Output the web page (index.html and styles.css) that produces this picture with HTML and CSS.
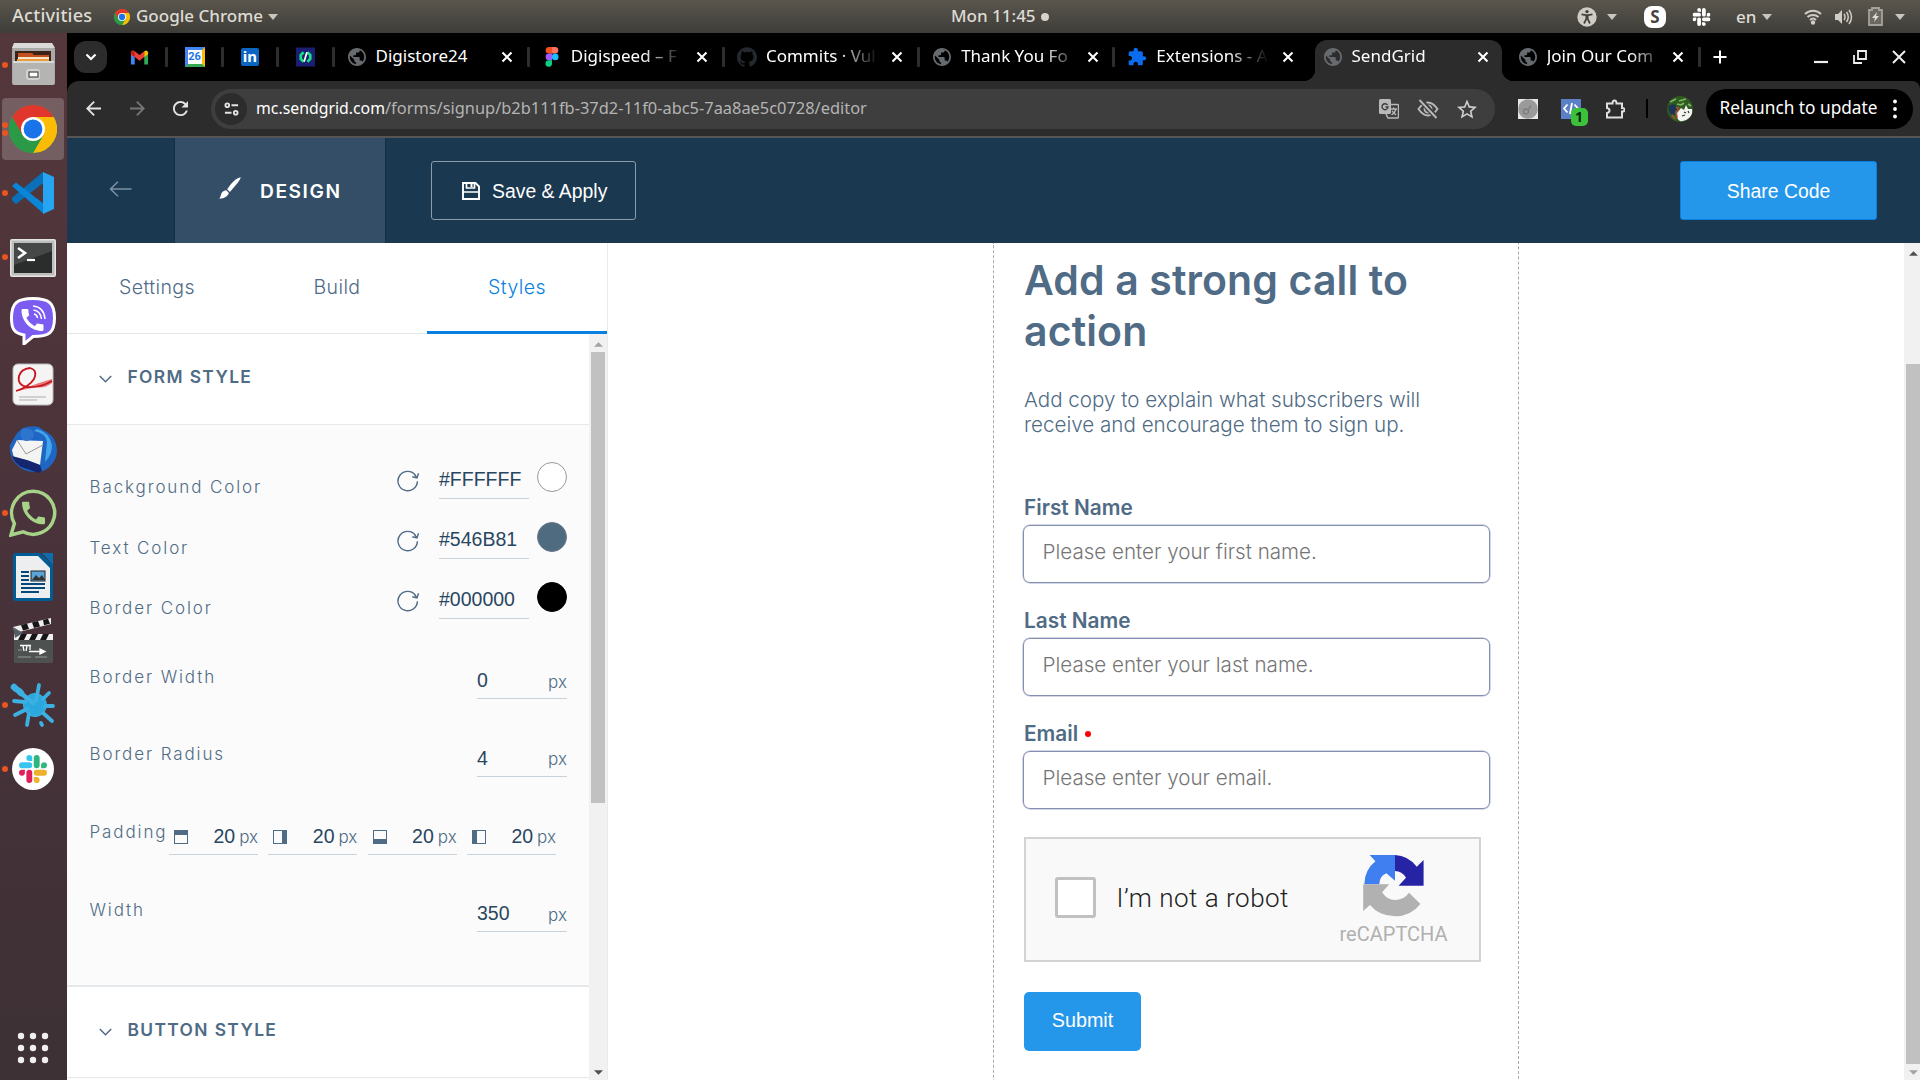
FILE: index.html
```
<!DOCTYPE html>
<html lang="en">
<head>
<meta charset="utf-8">
<title>SendGrid</title>
<link rel="stylesheet" href="styles.css">
</head>
<body>
<svg class="defs" width="0" height="0">
  <symbol id="chrome" viewBox="0 0 48 48">
    <circle cx="24" cy="24" r="24" fill="#34a853"/>
    <path d="M24 12 H44.8 A24 24 0 0 1 24 48 L34.4 30 Z" fill="#fbbc05"/>
    <path d="M3.2 12 A24 24 0 0 0 24 48 L34.4 30 L24 24 L13.6 30 Z" fill="#2b9a46"/>
    <path d="M3.2 12 A24 24 0 0 1 44.8 12 H24 L13.6 30 Z" fill="#e0362b"/>
    <circle cx="24" cy="24" r="12" fill="#fff"/>
    <circle cx="24" cy="24" r="9.4" fill="#1a73e8"/>
  </symbol>
  <symbol id="globe" viewBox="2 2 20 20"><path d="M12 2C6.480 2 2 6.480 2 12s4.480 10 10 10 10-4.480 10-10S17.520 2 12 2zm-1 17.930c-3.950-.49-7-3.850-7-7.930 0-.62.08-1.210.21-1.790L9 15v1c0 1.100.9 2 2 2v1.930zm6.900-2.540c-.26-.81-1-1.390-1.900-1.390h-1v-3c0-.55-.45-1-1-1H8v-2h2c.55 0 1-.45 1-1V7h2c1.100 0 2-.9 2-2v-.41c2.930 1.190 5 4.060 5 7.410 0 2.080-.8 3.970-2.100 5.390z"/></symbol>
  <symbol id="close" viewBox="0 0 12 12"><path d="M1.500 1.500l9 9m0-9l-9 9" fill="none" stroke="currentColor" stroke-width="2.100"/></symbol>
  <symbol id="arrow" viewBox="4 4 16 16"><path d="M20 11H7.830l5.590-5.590L12 4l-8 8 8 8 1.410-1.410L7.830 13H20v-2z"/></symbol>
  <symbol id="puzzle" viewBox="0 0 24 24"><path d="M20.500 11H19V7c0-1.100-.9-2-2-2h-4V3.500C13 2.120 11.880 1 10.500 1S8 2.120 8 3.500V5H4c-1.100 0-1.990.9-1.990 2v3.800H3.500c1.490 0 2.700 1.210 2.700 2.700s-1.210 2.700-2.700 2.700H2V20c0 1.100.9 2 2 2h3.800v-1.500c0-1.490 1.210-2.700 2.700-2.700 1.490 0 2.700 1.210 2.700 2.700V22H17c1.100 0 2-.9 2-2v-4h1.500c1.380 0 2.500-1.120 2.500-2.500S21.880 11 20.500 11z"/></symbol>
  <symbol id="slack-a" viewBox="0 0 24 24"><path d="M5.042 15.165a2.528 2.528 0 0 1-2.520 2.523A2.528 2.528 0 0 1 0 15.165a2.527 2.527 0 0 1 2.522-2.520h2.520v2.520zM6.313 15.165a2.527 2.527 0 0 1 2.521-2.520 2.527 2.527 0 0 1 2.521 2.520v6.313A2.528 2.528 0 0 1 8.834 24a2.528 2.528 0 0 1-2.521-2.522v-6.313z"/></symbol>
  <symbol id="slack-b" viewBox="0 0 24 24"><path d="M8.834 5.042a2.528 2.528 0 0 1-2.521-2.520A2.528 2.528 0 0 1 8.834 0a2.528 2.528 0 0 1 2.521 2.522v2.520H8.834zM8.834 6.313a2.528 2.528 0 0 1 2.521 2.521 2.528 2.528 0 0 1-2.521 2.521H2.522A2.528 2.528 0 0 1 0 8.834a2.528 2.528 0 0 1 2.522-2.521h6.312z"/></symbol>
  <symbol id="slack-c" viewBox="0 0 24 24"><path d="M18.956 8.834a2.528 2.528 0 0 1 2.522-2.521A2.528 2.528 0 0 1 24 8.834a2.528 2.528 0 0 1-2.522 2.521h-2.522V8.834zM17.688 8.834a2.528 2.528 0 0 1-2.523 2.521 2.527 2.527 0 0 1-2.520-2.521V2.522A2.527 2.527 0 0 1 15.165 0a2.528 2.528 0 0 1 2.523 2.522v6.312z"/></symbol>
  <symbol id="slack-d" viewBox="0 0 24 24"><path d="M15.165 18.956a2.528 2.528 0 0 1 2.523 2.522A2.528 2.528 0 0 1 15.165 24a2.527 2.527 0 0 1-2.520-2.522v-2.522h2.520zM15.165 17.688a2.527 2.527 0 0 1-2.520-2.523 2.526 2.526 0 0 1 2.520-2.520h6.313A2.527 2.527 0 0 1 24 15.165a2.528 2.528 0 0 1-2.522 2.523h-6.313z"/></symbol>
  <symbol id="phone" viewBox="3 3 18 18"><path transform="matrix(1 0 0 1 0 0)" d="M20.010 15.380c-1.230 0-2.420-.2-3.530-.56-.35-.12-.74-.03-1.010.24l-1.570 1.970c-2.830-1.350-5.480-3.900-6.890-6.830l1.950-1.660c.27-.28.35-.67.24-1.020-.37-1.110-.56-2.300-.56-3.530 0-.54-.45-.99-.99-.99H4.190C3.650 3 3 3.240 3 3.990 3 13.280 10.730 21 20.010 21c.71 0 .99-.63.99-1.180v-3.450c0-.54-.45-.99-.99-.99z"/></symbol>
  <symbol id="reset" viewBox="0 0 23 22"><path d="M20.400 11.200A9.700 9.700 0 1 1 18.600 5.400M15.300 6.800l4.700 1.200 1.500-4.700M20 8l-2.500-3.700" fill="none" stroke="#4f6b85" stroke-width="1.400"/></symbol>
  <symbol id="chevron" viewBox="0 0 13 8"><path d="M.8 1l5.700 5.700L12.200 1" fill="none" stroke="#4f6b85" stroke-width="1.500"/></symbol>
  <symbol id="caret" viewBox="0 0 10 6"><path d="M0 0h10L5 6z" fill="#c9c6bf"/></symbol>
</svg>

<header class="topbar">
  <div class="top-left">
    <span class="activities">Activities</span>
    <svg class="top-chrome"><use href="#chrome"/></svg>
    <span class="app-name">Google Chrome</span>
    <svg class="caret"><use href="#caret"/></svg>
  </div>
  <div class="clock"><span>Mon 11:45</span><i></i></div>
  <div class="tray">
    <svg class="t-access" viewBox="0 0 20 20"><circle cx="10" cy="10" r="9.700" fill="#cfccc6"/><circle cx="10" cy="4.600" r="1.700" fill="#45423d"/><path d="M4.500 7.300l4.500.8h2l4.500-.8M9.300 8v4L7 16.500M10.700 8v4L13 16.500M10 8v4" fill="none" stroke="#45423d" stroke-width="1.700"/></svg>
    <svg class="caret"><use href="#caret"/></svg>
    <span class="t-skype">S</span>
    <svg class="t-slack" viewBox="0 0 24 24" fill="#fff"><use href="#slack-a"/><use href="#slack-b"/><use href="#slack-c"/><use href="#slack-d"/></svg>
    <span class="t-lang">en</span>
    <svg class="caret"><use href="#caret"/></svg>
    <svg class="t-wifi" viewBox="0 0 18 16" fill="none" stroke="#cfccc6" stroke-width="2"><path d="M1 5.500a11.500 11.500 0 0 1 16 0M3.500 8.600a8 8 0 0 1 11 0" /><path d="M6 11.400a4.500 4.500 0 0 1 6 0" /><circle cx="9" cy="14" r="1.200" fill="#cfccc6"/></svg>
    <svg class="t-vol" viewBox="0 0 18 16" fill="none" stroke="#cfccc6" stroke-width="1.500"><path d="M0 5h3l4-4v14l-4-4H0z" fill="#cfccc6" stroke="none"/><path d="M9 5q2 3 0 6M11.500 3q3.500 5 0 10M14 1q5 7 0 14"/></svg>
    <svg class="t-bat" viewBox="0 0 15 19"><path d="M1 3h3V1h7v2h3v15H1z" fill="#6b6862" stroke="#a5a29c" stroke-width="1.800"/><path d="M9 5l-5 6h3l-1 4 5-6H8z" fill="#dfdcd6"/></svg>
    <svg class="caret"><use href="#caret"/></svg>
  </div>
</header>

<div class="desktop">
  <nav class="dock">
    <div class="app"><i class="dot"></i>
      <svg viewBox="0 0 48 48"><path d="M5 2h38l3 6v34q0 2-2 2H5q-2 0-2-2V8z" fill="#a9a9a7"/><path d="M5 2h38l3 5H3z" fill="#d9d9d7"/><path d="M6 10h36v13H6z" fill="#3a2418"/><path d="M9 12h14l2 2h15v3H9z" fill="#c5501f"/><path d="M9 16h31v2H9z" fill="#f6e6c8"/><path d="M8 18h32v3H8z" fill="#ef9a3c"/><path d="M4 20h41v22q0 2-2 2H6q-2 0-2-2z" fill="#b4b4b2"/><path d="M4 20h41v2H4z" fill="#d8d8d6"/><rect x="17" y="28" width="14" height="11" rx="3" fill="#d2d2d0"/><rect x="20" y="31" width="9" height="5" fill="#fff" stroke="#555" stroke-width="1.300"/></svg></div>
    <div class="app current"><i class="dot"></i><i class="dot"></i><svg><use href="#chrome"/></svg></div>
    <div class="app"><i class="dot"></i>
      <svg viewBox="0 0 48 48"><path d="M34 3v11L7 35l-4-3v-3z" fill="#0065a9"/><path d="M34 14L7 35l-4-4v-2L34 3z" fill="#0b70b8"/><path d="M3 17l4-3.500L35 35v10z" fill="#0a86d9"/><path d="M34 3l11 5v32l-11 5z" fill="#25a5f2"/></svg></div>
    <div class="app"><i class="dot"></i>
      <svg viewBox="0 0 48 48"><rect x="1" y="6" width="46" height="38" rx="2" fill="#e4e4e2"/><rect x="2.500" y="7.500" width="43" height="35" fill="#bdbdbb"/><rect x="5" y="10" width="38" height="30" fill="#2b2d2c"/><path d="M5 10h38v8L5 32z" fill="#454846"/><path d="M9 15l7 5-7 5" fill="none" stroke="#fff" stroke-width="2.600"/><path d="M18 27h8" stroke="#fff" stroke-width="2.200"/></svg></div>
    <div class="app">
      <svg viewBox="0 0 48 48"><path d="M24 1.500C40 1.500 45.500 6 45.500 21S40 39.500 24 39.500l-9 7.500v-9C5 36 2.500 32 2.500 21 2.500 6 8 1.500 24 1.500z" fill="#7c5cf0" stroke="#fff" stroke-width="3"/><use href="#phone" x="12" y="12" width="23" height="22" fill="#fff"/><path d="M24 9q11 1 12 13M24.500 13q7 1 8 9M25 17q3 .5 3.500 4" fill="none" stroke="#fff" stroke-width="1.500"/></svg></div>
    <div class="app">
      <svg viewBox="0 0 48 48"><rect x="4" y="3" width="40" height="41" rx="5" fill="#f4f4f4" stroke="#bbb"/><path d="M43 18q-14 4-24 8l-12 4q12-2 20-4 8 2 16-4z" fill="#e57a7a"/><path d="M7 30q13-4 18-12 4-9-4-11-9 1-11 8-2 9 8 11 13 1 25-6" fill="none" stroke="#c8151d" stroke-width="1.800"/><path d="M10 36h27M10 39h18" stroke="#c4c4c4" stroke-width="1.500"/></svg></div>
    <div class="app">
      <svg viewBox="0 0 48 48"><path d="M14 3q9-3 16-1l4 3q10 4 13 14 3 12-4 20-5 7-14 8-14 1-22-8Q0 32 1 20l4-7q3-6 9-10z" fill="#1f66c4"/><path d="M28 4q12 3 15 16 0 10-7 17l2-20q-1-9-13-11z" fill="#43a5ea"/><path d="M8 15l26 1-3 24-13-5-13-2-2-8z" fill="#f4f4f2"/><path d="M8 15l9 14 17-9" fill="none" stroke="#999" stroke-width="1"/><path d="M12 5q6-4 12 1 3 8-6 10-8 0-6-11z" fill="#2d74cf"/><path d="M3 31q13 3 28 9l2 6-4 2-8-3-9-3q-7-5-9-11z" fill="#14266d"/></svg></div>
    <div class="app"><i class="dot"></i>
      <svg viewBox="0 0 48 48"><path d="M24.500 2.300a21.500 21.500 0 1 1-10.400 40.500L2 46l3.400-11.500A21.500 21.500 0 0 1 24.500 2.300z" fill="none" stroke="#a6d388" stroke-width="3.500"/><use href="#phone" x="13" y="12.500" width="23" height="23" fill="#a6d388"/></svg></div>
    <div class="app">
      <svg viewBox="0 0 48 48"><path d="M7 0h24l13 12v33q0 3-3 3H7q-3 0-3-3V3q0-3 3-3z" fill="#005c94"/><path d="M33 0h11v12z" fill="#0c6ead"/><path d="M7 3h22l12 12v30H7z" fill="#eceef0"/><path d="M12 19h8M12 23h8M12 27h8M12 31h24M12 35h24M12 39h18" stroke="#014a7b" stroke-width="1.900"/><rect x="22" y="18" width="14" height="10" fill="#5aa5d8" stroke="#222"/><path d="M23 27l4-5 3 3 3-3 3 5z" fill="#333"/></svg></div>
    <div class="app">
      <svg viewBox="0 0 48 48"><rect x="5" y="17" width="39" height="29" rx="1.500" fill="#4d5150"/><path d="M5 17h39v6H5z" fill="#eee"/><path d="M12 17h6l-3 6H9zM23 17h6l-3 6h-6zM34 17h6l-3 6h-6z" fill="#161616"/><path d="M4 10L42 1v6L6 16z" fill="#eee"/><path d="M12 8l6-1.500 2 5.500-6 1.500zM23 5.500l6-1.500 2 5.500-6 1.500zM34 3l5-1.200 2 5-6 1.500z" fill="#161616"/><path d="M4 10l10 6-8 5z" fill="#565c66"/><path d="M11 28.500h11M14 29l1 5M18 29l-1 5M21 28v5M20 34.500h14M31 32l5 2.500-5 2.500z" fill="#fff" stroke="#fff" stroke-width="1.300"/><path d="M9 40h13M9 33h4M26 40h12" stroke="#999"/></svg></div>
    <div class="app"><i class="dot"></i>
      <svg viewBox="0 0 48 48" stroke="#3cb0e2" fill="#2ba8de" stroke-linecap="round"><circle cx="26" cy="24" r="11.500"/><path d="M24 22L8 9" stroke-width="4.500"/><path d="M7 8l-2-2M12 12l-2-2" stroke-width="6.500"/><path d="M27 20l3-16M34 18l6-6M36 25l8 0M34 32l9 8M20 32l-2 12M18 28L6 34M16 21l-11-1M32 42l1 2" stroke-width="3.800"/></svg></div>
    <div class="app"><i class="dot"></i>
      <svg viewBox="0 0 48 48"><circle cx="24" cy="24" r="21" fill="#fff"/><g transform="translate(10 10)"><use href="#slack-a" width="28" height="28" fill="#e01e5a"/><use href="#slack-b" width="28" height="28" fill="#36c5f0"/><use href="#slack-c" width="28" height="28" fill="#2eb67d"/><use href="#slack-d" width="28" height="28" fill="#ecb22e"/></g></svg></div>
    <svg class="show-apps" viewBox="0 0 32 32" fill="#f2f0ef"><circle cx="4" cy="4" r="3.200"/><circle cx="16" cy="4" r="3.200"/><circle cx="28" cy="4" r="3.200"/><circle cx="4" cy="16" r="3.200"/><circle cx="16" cy="16" r="3.200"/><circle cx="28" cy="16" r="3.200"/><circle cx="4" cy="28" r="3.200"/><circle cx="16" cy="28" r="3.200"/><circle cx="28" cy="28" r="3.200"/></svg>
  </nav>

  <section class="window">
    <div class="tabstrip">
      <div class="tab-search"><svg viewBox="0 0 12 8"><path d="M1.500 1.500L6 6l4.500-4.500" fill="none" stroke="#fff" stroke-width="2.200"/></svg></div>
      <div class="pinned"><svg viewBox="0 0 20 16"><path d="M1 16V3l4 3v10z" fill="#4285f4"/><path d="M19 16V3l-4 3v10z" fill="#34a853"/><path d="M1 3q1-3 4-1l5 4 5-4v6l-5 4-5-4L1 6z" fill="#ea4335"/><path d="M1 3q1-3 4-1v6L1 5z" fill="#c5221f"/><path d="M19 3q-1-3-4-1v6l4-3z" fill="#fbbc04"/></svg></div><i class="sep"></i>
      <div class="pinned"><span class="cal"><b>26</b></span></div><i class="sep"></i>
      <div class="pinned"><span class="linkedin">in</span></div><i class="sep"></i>
      <div class="pinned"><svg viewBox="0 0 20 20"><path d="M0 0h20v20H0z" fill="#1b1f73"/><path d="M8 5L5 8v4l3 3M12 5l3 3v4l-3 3" fill="none" stroke="#19e07f" stroke-width="2.800"/><path d="M11.500 5l-3 10" stroke="#fff" stroke-width="1.800"/></svg></div><i class="sep"></i>
      <div class="tab"><svg class="fav globe"><use href="#globe"/></svg><span>Digistore24</span><svg class="x"><use href="#close"/></svg></div><i class="sep"></i>
      <div class="tab"><svg class="fav" viewBox="0 0 20 20"><path d="M10 0H7a3.300 3.300 0 0 0 0 6.600h3z" fill="#f24e1e"/><path d="M10 0h3a3.300 3.300 0 0 1 0 6.600h-3z" fill="#ff7262"/><path d="M10 6.600H7a3.300 3.300 0 0 0 0 6.600h3z" fill="#a259ff"/><circle cx="13.200" cy="9.900" r="3.300" fill="#1abcfe"/><path d="M10 13.200H7A3.300 3.300 0 1 0 10 17z" fill="#0acf83"/></svg><span>Digispeed – F</span><svg class="x"><use href="#close"/></svg></div><i class="sep"></i>
      <div class="tab"><svg class="fav" viewBox="0 0 24 24" fill="#24292f"><path d="M12 .297c-6.630 0-12 5.373-12 12 0 5.303 3.438 9.800 8.205 11.385.6.113.82-.258.82-.577 0-.285-.01-1.040-.015-2.040-3.338.724-4.042-1.610-4.042-1.610C4.422 18.070 3.633 17.700 3.633 17.700c-1.087-.744.084-.729.084-.729 1.205.084 1.838 1.236 1.838 1.236 1.070 1.835 2.809 1.305 3.495.998.108-.776.417-1.305.76-1.605-2.665-.3-5.466-1.332-5.466-5.930 0-1.310.465-2.380 1.235-3.220-.135-.303-.54-1.523.105-3.176 0 0 1.005-.322 3.300 1.230.96-.267 1.980-.399 3-.405 1.020.006 2.040.138 3 .405 2.280-1.552 3.285-1.230 3.285-1.230.645 1.653.24 2.873.12 3.176.765.84 1.230 1.910 1.230 3.220 0 4.610-2.805 5.625-5.475 5.920.42.36.81 1.096.81 2.220 0 1.606-.015 2.896-.015 3.286 0 .315.21.69.825.57C20.565 22.092 24 17.592 24 12.297c0-6.627-5.373-12-12-12"/></svg><span>Commits · Vul</span><svg class="x"><use href="#close"/></svg></div><i class="sep"></i>
      <div class="tab"><svg class="fav globe"><use href="#globe"/></svg><span>Thank You Fo</span><svg class="x"><use href="#close"/></svg></div><i class="sep"></i>
      <div class="tab"><svg class="fav" fill="#0b6cf0"><use href="#puzzle"/></svg><span>Extensions - A</span><svg class="x"><use href="#close"/></svg></div><i class="sep off"></i>
      <div class="tab active"><svg class="fav globe"><use href="#globe"/></svg><span>SendGrid</span><svg class="x"><use href="#close"/></svg></div><i class="sep off"></i>
      <div class="tab"><svg class="fav globe"><use href="#globe"/></svg><span>Join Our Com</span><svg class="x"><use href="#close"/></svg></div><i class="sep"></i>
      <svg class="plus" viewBox="0 0 14 14"><path d="M7 0.500v13M.5 7h13" stroke="#fff" stroke-width="2"/></svg>
      <div class="win-buttons">
        <svg viewBox="0 0 14 14"><path d="M0 12h14" stroke="#eee" stroke-width="2.200"/></svg>
        <svg viewBox="0 0 14 14" fill="none" stroke="#eee" stroke-width="1.800"><path d="M5 1h8v8H5zM1 5v8h8"/></svg>
        <svg viewBox="0 0 14 14"><path d="M1 1l12 12M13 1L1 13" stroke="#eee" stroke-width="2"/></svg>
      </div>
    </div>

    <div class="toolbar">
      <div class="nav">
        <svg fill="#e3e3e3"><use href="#arrow"/></svg>
        <svg class="fwd" fill="#757575"><use href="#arrow"/></svg>
        <svg viewBox="4 4 16 16" fill="#e3e3e3"><path d="M17.650 6.350C16.200 4.900 14.210 4 12 4c-4.420 0-7.990 3.580-7.990 8s3.570 8 7.990 8c3.730 0 6.840-2.550 7.730-6h-2.080c-.82 2.330-3.040 4-5.650 4-3.310 0-6-2.690-6-6s2.690-6 6-6c1.660 0 3.140.69 4.220 1.780L13 11h7V4l-2.350 2.350z"/></svg>
      </div>
      <div class="omnibox">
        <div class="site"><svg viewBox="0 0 16 14" fill="none" stroke="#e3e3e3" stroke-width="2"><circle cx="3.500" cy="3" r="2"/><path d="M8 3h7M1 11h7"/><circle cx="12.500" cy="11" r="2"/></svg></div>
        <p class="url"><b>mc.sendgrid.com</b><span>/forms/signup/b2b111fb-37d2-11f0-abc5-7aa8ae5c0728/editor</span></p>
        <div class="omni-icons">
          <svg viewBox="0 0 20 20"><rect x="0" y="0" width="12" height="15" rx="1.500" fill="#b9b9b9"/><path d="M9 5.500h9.500q1 0 1 1V18q0 1-1 1H9L7 15" fill="none" stroke="#b9b9b9" stroke-width="1.500"/><path d="M8.500 6A3 3 0 1 0 9 8H6.500" fill="none" stroke="#3e3e3e" stroke-width="1.400"/><path d="M11 10h7M14.500 8.500V10M17 10q-1 4-4.500 6M13 12l4 4" stroke="#b9b9b9" stroke-width="1.300" fill="none"/></svg>
          <svg class="eye" viewBox="0 0 22 20" fill="none" stroke="#b9b9b9" stroke-width="1.900"><path d="M1.500 10Q6 3.500 11 3.500T20.500 10Q16 16.500 11 16.500T1.500 10z"/><circle cx="11" cy="10" r="3.500"/><path d="M3.500 1l16 18" stroke="#3e3e3e" stroke-width="5"/><path d="M2.500 1l17 18"/></svg>
          <svg viewBox="2 2 20 19" fill="#d0d0d0"><path d="M22 9.240l-7.190-.62L12 2 9.190 8.630 2 9.240l5.460 4.730L5.820 21 12 17.270 18.180 21l-1.630-7.030L22 9.240zM12 15.400l-3.760 2.270 1-4.280-3.320-2.880 4.380-.38L12 6.100l1.710 4.040 4.380.38-3.320 2.880 1 4.280L12 15.400z"/></svg>
        </div>
      </div>
      <svg class="ext1" viewBox="0 0 20 20"><path d="M0 0h20v20H0z" fill="#e6e6e6"/><circle cx="10" cy="10" r="9.800" fill="#9a9a9a"/><circle cx="8" cy="12.500" r="2.500" fill="none" stroke="#7d7d7d" stroke-width="1.300"/><path d="M10.500 10l2.500-3.500" stroke="#7d7d7d" stroke-width="1.300"/></svg>
      <div class="ext2"><svg viewBox="0 0 20 20"><path d="M0 0h20v20H0z" fill="#5b80c7"/><path d="M6.500 5.500L3 9.500l3.500 4M11 4L9 15M13.500 5.500l3.500 4" fill="none" stroke="#fff" stroke-width="1.800"/></svg><b>1</b></div>
      <svg class="ext3" viewBox="0 0 20 20"><path d="M2 4.500h5.500q0-3 2-3t2 3h5.500V9q2.700 0 2.700 1.800T17 12.600V18.500H2V14q2.500-.5 2.500-2.500T2 9z" fill="none" stroke="#dedede" stroke-width="2"/></svg>
      <i class="bar"></i>
      <svg class="avatar" viewBox="0 0 26 26"><circle cx="13" cy="13" r="13" fill="#2f5a22"/><path d="M10 17l4-5 3 2 2-5 2 4 4 0q1 6-3 9-4 4-9 3-4-2-3-8z" fill="#f3f3f0"/><path d="M1 10l6-2 4 4-2 7-6-1z" fill="#1c3654"/><path d="M3 6l6-3M12 5l7-2M14 9l3-2M21 8l3 2M10 8l4 1" stroke="#7cb95c" stroke-width="1.800"/><path d="M9 11l3 2-3 3 1 6M5 19l3 4" stroke="#a0522d" stroke-width="1.800" fill="none"/><path d="M17 16l2 1M21 15l1 2M15 20l3-1" stroke="#333" stroke-width="1.200"/></svg>
      <div class="relaunch"><span>Relaunch to update</span><svg viewBox="0 0 4 20" fill="#fff"><circle cx="2" cy="2.500" r="1.900"/><circle cx="2" cy="10" r="1.900"/><circle cx="2" cy="17.500" r="1.900"/></svg></div>
    </div>

    <div class="app-header">
      <div class="back"><svg viewBox="0 0 23 16"><path d="M22.500 8H1.500M9 .8L1.500 8 9 15.200" fill="none" stroke="#7d91a3" stroke-width="1.500"/></svg></div>
      <div class="design"><svg viewBox="0 0 22 22" fill="#fff"><path d="M21.800.2Q17 1 12 7L8.200 12.300l2.700 2.600L16 9Q21 3.500 21.800.2zM7.300 13.300l2.600 2.600Q8.500 21 .2 21.800q1.300-1 1.600-3.500.8-4.500 5.500-5z"/></svg><span>DESIGN</span></div>
      <button class="save"><svg viewBox="0 0 18 18"><path d="M1 1h12.500L17 4.500V17H1z" fill="none" stroke="#fff" stroke-width="1.900"/><path d="M4.500 1v5h8V1M1 10h16" fill="none" stroke="#fff" stroke-width="1.700"/><path d="M9.500 1v4" stroke="#fff" stroke-width="2"/></svg><span>Save &amp; Apply</span></button>
      <button class="share">Share Code</button>
    </div>

    <div class="content">
      <aside class="panel">
        <div class="panel-tabs"><span>Settings</span><span>Build</span><span class="on">Styles</span></div>
        <div class="panel-scroll">
          <div class="sections">
            <h3 class="section-head"><svg><use href="#chevron"/></svg>FORM STYLE</h3>
            <div class="section-body">
              <div class="color-row"><label>Background Color</label><svg><use href="#reset"/></svg><div class="hex">#FFFFFF</div><i class="swatch white"></i></div>
              <div class="color-row"><label>Text Color</label><svg><use href="#reset"/></svg><div class="hex">#546B81</div><i class="swatch slate"></i></div>
              <div class="color-row"><label>Border Color</label><svg><use href="#reset"/></svg><div class="hex">#000000</div><i class="swatch black"></i></div>
              <div class="px-row"><label>Border Width</label><div class="px-field"><span>0</span><em>px</em></div></div>
              <div class="px-row"><label>Border Radius</label><div class="px-field"><span>4</span><em>px</em></div></div>
              <div class="px-row"><label>Padding</label>
                <div class="pads">
                  <div class="px-field"><i class="side top"></i><span>20</span><em>px</em></div>
                  <div class="px-field"><i class="side right"></i><span>20</span><em>px</em></div>
                  <div class="px-field"><i class="side bottom"></i><span>20</span><em>px</em></div>
                  <div class="px-field"><i class="side left"></i><span>20</span><em>px</em></div>
                </div>
              </div>
              <div class="px-row"><label>Width</label><div class="px-field"><span>350</span><em>px</em></div></div>
            </div>
            <h3 class="section-head"><svg><use href="#chevron"/></svg>BUTTON STYLE</h3>
          </div>
          <div class="scrollbar inner"><svg viewBox="0 0 8 4"><path d="M4 0l4 4H0z" fill="#a3a3a3"/></svg><i></i><svg viewBox="0 0 8 4"><path d="M4 4L0 0h8z" fill="#505050"/></svg></div>
        </div>
      </aside>

      <main class="preview">
        <div class="form">
          <h1>Add a strong call to<br>action</h1>
          <p class="copy">Add copy to explain what subscribers will<br>receive and encourage them to sign up.</p>
          <label>First Name</label>
          <div class="input">Please enter your first name.</div>
          <label>Last Name</label>
          <div class="input">Please enter your last name.</div>
          <label>Email<i></i></label>
          <div class="input">Please enter your email.</div>
          <div class="captcha">
            <i class="check"></i>
            <span class="robot">I’m not a robot</span>
            <div class="brand">
              <svg viewBox="0 0 64 66"><path d="M7.600 2H33v25.700l-8.600-7.400Q17.300 23 17.300 31.300h-15Q2.500 17 13.400 8.300z" fill="#3f7ff0"/><path d="M33 2q13 .5 21.800 11.700L61.600 7v25.700h-25l7.400-8Q40 18 33 18z" fill="#2623a4"/><path d="M1.200 31.300h26.100l-7.200 8Q25 47 33 47q9 0 14-7.300L58.400 51Q49 63.300 33 63.300 17 63 8 52l-6.800 6z" fill="#b1b1b1"/></svg>
              <span>reCAPTCHA</span>
            </div>
          </div>
          <button class="submit">Submit</button>
        </div>
      </main>
      <div class="scrollbar outer"><svg viewBox="0 0 8 4"><path d="M4 0l4 4H0z" fill="#505050"/></svg><i></i><svg viewBox="0 0 8 4"><path d="M4 4L0 0h8z" fill="#a3a3a3"/></svg></div>
    </div>
  </section>
</div>
</body>
</html>
```
FILE: styles.css
```
* { box-sizing: border-box; margin: 0; padding: 0; }
html, body { width: 1920px; height: 1080px; overflow: hidden; }
body { display: flex; flex-direction: column; font-family: "Noto Sans", sans-serif; background: #fff; }
.defs { position: absolute; }
svg { display: block; flex: none; }
i, em { font-style: normal; }
button { font: inherit; }

/* System bar */
.topbar { height: 33px; flex: none; display: grid; grid-template-columns: 951px auto 1fr; align-items: center; background: linear-gradient(#5a564e, #3e3d38); color: #dedbd4; font-size: 17px; font-weight: 500; line-height: 31px; }
.top-left { display: flex; align-items: center; padding-left: 12px; }
.top-left span, .clock span { height: 33px; }
.activities { width: 102px; font-size: 18.2px; letter-spacing: .2px; }
.top-chrome { width: 16px; height: 16px; margin-right: 6px; }
.app-name { width: 132px; }
.caret { width: 10px; height: 6px; }
.clock { display: flex; align-items: center; gap: 5px; }
.clock i { width: 8px; height: 8px; border-radius: 50%; background: #d6d3cc; }
.tray { display: flex; align-items: center; justify-content: flex-end; padding-right: 15px; }
.t-access { width: 20px; height: 20px; margin-right: 10px; }
.t-skype { width: 22px; height: 22px; margin: 0 26px 0 27px; border-radius: 8px; background: #fff; color: #47443f; font: 700 17px/22px "Noto Sans", sans-serif; text-align: center; }
.t-slack { width: 19px; height: 18px; margin-right: 25px; }
.t-lang { width: 26px; height: 32px; font-size: 17px; }
.t-wifi { width: 18px; height: 17px; margin: 0 13px 0 32px; }
.t-vol { width: 18px; height: 16px; margin-right: 15px; }
.t-bat { width: 15px; height: 19px; margin-right: 12px; }

/* Launcher */
.desktop { flex: 1; display: flex; min-height: 0; }
.dock { width: 67px; flex: none; display: flex; flex-direction: column; background: linear-gradient(#54373b, #47323a 60%, #3d3135); }
.app { position: relative; height: 62px; width: 62px; margin: 1px 0 1px 2px; border-radius: 4px; display: flex; flex-direction: column; align-items: center; justify-content: center; }
.app.current { background: rgba(255, 255, 255, .2); }
.app > svg { width: 48px; height: 48px; }
.dot { position: absolute; left: 0; top: 28px; width: 6px; height: 6px; border-radius: 50%; background: #e95420; }
.current .dot { top: 24px; }
.current .dot + .dot { top: 32px; }
.show-apps { width: 32px; height: 32px; margin: auto 0 16px 17px; }

/* Browser tab strip */
.window { flex: 1; display: flex; flex-direction: column; min-width: 0; background: #000; }
.tabstrip { height: 48px; flex: none; display: flex; align-items: center; background: #000; color: #fff; padding-left: 7px; }
.tab-search { width: 33px; height: 32px; margin-right: 6px; border-radius: 12px; background: #2c2c2c; display: grid; place-items: center; }
.tab-search svg { width: 12px; height: 8px; }
.pinned { width: 52.400px; flex: none; display: grid; place-items: center; }
.pinned svg { width: 19px; height: 20px; }
.cal { width: 20px; height: 20px; background: #fff; border: solid; border-width: 3px; border-color: #4285f4 #fbbc04 #34a853 #4285f4; display: grid; place-items: center; }
.cal b { font: 700 11px/12px Roboto, sans-serif; color: #1a73e8; }
.linkedin { width: 18px; height: 18px; border-radius: 2px; background: #0a66c2; font: 700 15px/17px "Noto Sans", sans-serif; text-align: center; }
.sep { width: 3px; height: 20px; flex: none; border-radius: 1px; background: #2e2e2e; }
.sep.off { background: none; }
.tab { position: relative; width: 192.200px; height: 48px; flex: none; display: flex; align-items: center; padding-left: 12px; font-size: 17px; }
.fav { width: 20px; height: 20px; margin-right: 9px; }
.fav.globe { width: 18px; height: 18px; margin: 0 10px 0 1px; fill: #666b70; }
.tab span { position: relative; width: 115px; height: 26px; line-height: 24px; white-space: nowrap; -webkit-mask-image: linear-gradient(90deg, #000 62%, transparent 98%); mask-image: linear-gradient(90deg, #000 62%, transparent 98%); }
.tab:has(.globe) span { -webkit-mask-image: linear-gradient(90deg, #000 72%, transparent 102%); mask-image: linear-gradient(90deg, #000 72%, transparent 102%); }
.tab:has(.globe):nth-of-type(6) span { -webkit-mask-image: none; mask-image: none; }
.tab .x { position: relative; width: 12px; height: 12px; margin-left: 10.500px; color: #fff; }
.tab.active::before { content: ""; position: absolute; left: 4px; right: 1px; top: 7px; bottom: 0; border-radius: 12px 12px 0 0; background: #2c2c2c; }
.tab.active::after { content: ""; position: absolute; left: -8px; right: -11px; bottom: 0; height: 12px; background: radial-gradient(circle at 0 0, transparent 12px, #2c2c2c 12.500px) left / 12px 12px no-repeat, radial-gradient(circle at 100% 0, transparent 12px, #2c2c2c 12.500px) right / 12px 12px no-repeat; }
.tab.active .fav { position: relative; }
.plus { width: 14px; height: 14px; margin-left: 12px; }
.win-buttons { display: flex; gap: 25px; margin-left: auto; padding-right: 14px; }
.win-buttons svg { width: 14px; height: 14px; }

/* Browser toolbar */
.toolbar { height: 57px; flex: none; display: flex; align-items: center; background: #2c2c2c; border-bottom: 2px solid #575553; border-radius: 12px 8px 0 0; }
.nav { display: flex; gap: 28.500px; padding-left: 19px; width: 144px; }
.nav svg { width: 15px; height: 15px; }
.nav .fwd { transform: scaleX(-1); }
.omnibox { width: 1284px; height: 40px; flex: none; border-radius: 20px; background: #3e3e3e; display: flex; align-items: center; padding-left: 4px; }
.site { width: 32px; height: 32px; border-radius: 50%; background: #2c2c2c; display: grid; place-items: center; margin-right: 9px; }
.site svg { width: 15px; height: 14px; }
.url { font-size: 16.400px; line-height: 38px; height: 40px; white-space: nowrap; color: #b4b4b4; }
.url b { display: inline-block; width: 129px; font-weight: 400; font-size: 15.830px; color: #fff; }
.omni-icons { display: flex; align-items: center; gap: 18px; margin-left: auto; padding-right: 18px; }
.omni-icons svg { width: 20px; height: 20px; }
.omni-icons .eye { width: 22px; }
.ext1 { width: 20px; height: 20px; margin-left: 22.500px; }
.ext2 { position: relative; width: 20px; height: 20px; margin-left: 23px; }
.ext2 svg { width: 20px; height: 20px; }
.ext2 b { position: absolute; left: 10px; top: 9px; width: 17px; height: 18px; border-radius: 5px; background: #3cc13b; color: #06250a; font: 700 14px/18px "Noto Sans", sans-serif; text-align: center; }
.ext3 { width: 20px; height: 20px; margin-left: 24px; }
.bar { width: 2px; height: 19px; margin: 0 19px 0 21px; background: #000; }
.avatar { width: 26px; height: 26px; margin-right: 13px; }
.relaunch { width: 207px; height: 40px; border-radius: 20px; background: #000; color: #fff; display: flex; align-items: center; padding-left: 14px; font-size: 17.250px; line-height: 38px; }
.relaunch span { width: 173px; height: 40px; white-space: nowrap; }
.relaunch svg { width: 4px; height: 20px; }

/* Editor header */
.app-header { height: 105px; flex: none; display: flex; align-items: center; background: #1a3850; color: #fff; }
.back { width: 108px; height: 105px; display: flex; align-items: center; padding: 0 0 3px 42px; border-right: 1px solid #142f45; }
.back svg { width: 23px; height: 16px; }
.design { width: 211px; height: 105px; display: flex; align-items: center; padding-left: 44px; background: #334e66; border-right: 1px solid #142f45; font: 600 19.200px/24px Inter, sans-serif; letter-spacing: 1.550px; }
.design svg { width: 22px; height: 22px; margin: 0 19px 6px 0; }
.save, .share { height: 59px; border-radius: 3px; color: #fff; font: 19.400px/24px "Liberation Sans", sans-serif; }
.save { width: 205px; margin-left: 45px; display: flex; align-items: center; padding-left: 30px; background: none; border: 1px solid #8c9ca8; }
.save svg { width: 18px; height: 18px; margin-right: 12px; }
.share { width: 197px; margin: 0 43px 0 auto; background: #2597ea; border: 1px solid #0a7fe2; }

/* Settings panel */
.content { flex: 1; display: flex; min-height: 0; background: #fff; }
.panel { width: 541px; flex: none; display: flex; flex-direction: column; border-right: 1px solid #e9ebed; font-family: Inter, sans-serif; color: #4f6b85; }
.panel-tabs { height: 91px; flex: none; display: flex; border-bottom: 1px solid #e6e9eb; }
.panel-tabs span { width: 180px; height: 91px; padding-top: 32px; text-align: center; font-size: 19.500px; font-weight: 300; line-height: 25px; letter-spacing: .4px; }
.panel-tabs .on { color: #0a7fe2; border-bottom: 3px solid #0a7fe2; }
.panel-scroll { flex: 1; display: flex; min-height: 0; }
.sections { width: 522px; flex: none; overflow: hidden; background: #fdfdfd; }
.section-head { height: 91px; display: flex; align-items: center; padding: 0 0 5px 31.500px; border-bottom: 1px solid #e6e9eb; background: #fff; font-size: 17.400px; font-weight: 600; letter-spacing: 1.360px; }
.section-head svg { width: 13px; height: 8px; margin: 4px 16px 0 0; }
.section-body { height: 562px; padding: 27px 22px 0 22.500px; background: #fbfbfb; border-bottom: 2px solid #e6e9eb; }
.section-body label { font-size: 17px; font-weight: 300; line-height: 24px; letter-spacing: 1.890px; white-space: nowrap; }
.color-row { height: 60px; display: flex; align-items: flex-start; }
.color-row label { flex: 1; margin-top: 23px; }
.color-row + .color-row label { margin-top: 24px; }
.color-row svg { width: 23px; height: 22px; margin: 18px 19px 0 0; }
.hex { width: 90px; height: 47px; padding-top: 15px; margin-right: 8px; border-bottom: 1px solid #c8d2da; color: #294661; font: 19.500px/24px "Liberation Sans", sans-serif; }
.swatch { width: 30px; height: 30px; margin-top: 10px; border-radius: 50%; border: 1px solid #999; }
.white { background: #fff; }
.slate { background: #4f6b80; border-color: #667788; }
.black { background: #000; border-color: #000; }
.px-row { height: 77.800px; display: flex; justify-content: space-between; align-items: flex-start; }
.px-row label { width: 77px; margin-top: 32.600px; }
.px-field { width: 90px; height: 67px; display: flex; align-items: flex-start; border-bottom: 1px solid #c8d2da; }
.px-field span { margin: 36px auto 0 0; color: #294661; font: 19.500px/24px "Liberation Sans", sans-serif; }
.px-field em { margin-top: 37.500px; font-size: 17px; font-weight: 300; line-height: 24px; }
.pads { display: flex; gap: 10.300px; margin-right: 11px; }
.pads .px-field { width: 89px; padding-left: 5px; }
.pads span { margin: 36px 4px 0 auto; }
.side { width: 14px; height: 14px; margin-top: 42px; border: 1px solid #4f6b85; }
.side.top { border-top-width: 5px; }
.side.right { border-right-width: 5px; }
.side.bottom { border-bottom-width: 5px; }
.side.left { border-left-width: 5px; }

/* Scrollbars */
.scrollbar { display: flex; flex-direction: column; align-items: center; background: #f1f1f1; padding: 8px 0 5px; }
.scrollbar svg { width: 9px; height: 5px; }
.scrollbar i { background: #c1c1c1; }
.scrollbar svg:last-child { margin-top: auto; }
.inner { width: 18px; }
.inner i { width: 14px; height: 451px; margin-top: 5px; }
.outer { width: 16px; padding-left: 2px; }
.outer i { width: 14px; height: 700px; margin-top: 108px; }

/* Form preview */
.preview { flex: 1; display: flex; justify-content: center; align-items: flex-start; overflow: hidden; font-family: Inter, sans-serif; color: #4f6b85; }
.form { width: 526px; height: 841px; padding: 12px 29px 0 30px; border: 1px dashed #a9a9a9; border-top: 0; border-radius: 0 0 6px 6px; display: flex; flex-direction: column; flex: none; }
.form h1 { font-size: 41px; font-weight: 600; line-height: 51px; letter-spacing: .12px; margin-bottom: 30px; white-space: nowrap; }
.copy { font-size: 20.600px; font-weight: 300; line-height: 25px; margin-bottom: 57px; white-space: nowrap; }
.form label { height: 27px; line-height: 26px; font-size: 20.800px; font-weight: 600; display: flex; align-items: center; }
.form label i { width: 6px; height: 6px; border-radius: 50%; background: #f00; margin-left: 7px; }
.input { width: 467px; height: 58px; margin: 4px 0 24px -1.500px; padding: 12px 0 0 19px; border: 1px solid #8490b2; border-radius: 7px; box-shadow: 0 0 0 .5px #a9b1ca; font-size: 20.600px; font-weight: 300; line-height: 28px; color: #757575; }
.captcha { width: 457px; height: 125px; margin-top: 4px; border: 2px solid #d3d3d3; background: #f9f9f9; display: flex; align-items: flex-start; padding-left: 29px; font-family: Roboto, sans-serif; }
.check { width: 41px; height: 41px; margin: 38px 20.500px 0 0; border: 3px solid #c1c1c1; border-radius: 3px; background: #fff; }
.robot { width: 223px; margin-top: 42.500px; color: #222; font-size: 26px; font-weight: 300; line-height: 32px; letter-spacing: .5px; }
.brand { display: flex; flex-direction: column; align-items: center; }
.brand svg { width: 64px; height: 66px; margin-top: 14px; }
.brand span { margin-top: 3px; color: #b0b0b0; font-size: 20px; line-height: 24px; }
.submit { width: 117px; height: 59px; margin-top: 30px; padding-bottom: 3px; border: 0; border-radius: 5px; background: #2597ea; color: #fff; font: 19.700px/24px "Liberation Sans", sans-serif; }
```
